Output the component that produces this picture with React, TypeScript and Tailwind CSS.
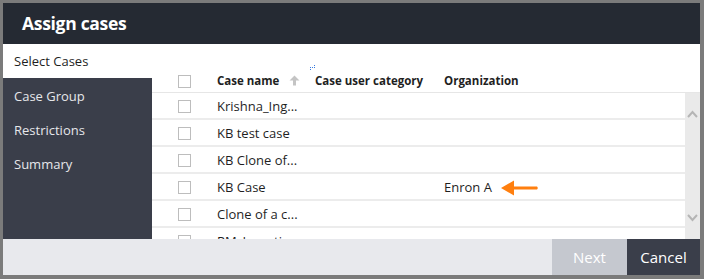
import React from 'react'

const rows = [
    { name: 'Krishna_Ing...', org: '' },
    { name: 'KB test case', org: '' },
    { name: 'KB Clone of...', org: '' },
    { name: 'KB Case', org: 'Enron A', arrow: true },
    { name: 'Clone of a c...', org: '' },
    { name: 'RM_Investig...', org: '' },
]

const Box = () => (
    <div className="w-[13px] h-[13px] border border-[#bdbdbd] bg-white" />
)

const App = () => {
    return (
        <div
            className="w-[704px] h-[279px] bg-[#7b7b7b] pt-[3px] pl-[3px] pr-[4px] pb-[4px] text-[#1f1f1f]"
            style={{ fontFamily: '"Open Sans", "Noto Sans", sans-serif' }}
        >
            <div className="flex flex-col w-full h-full bg-white overflow-hidden">
                {/* header */}
                <div className="h-[41px] shrink-0 bg-[#252a33] flex items-center pl-[19px]">
                    <span className="text-white text-[17.5px] font-bold tracking-[-0.3px]">Assign cases</span>
                </div>
                <div className="flex flex-1 min-h-0">
                    {/* sidebar */}
                    <div className="w-[149px] shrink-0 flex flex-col">
                        <div className="h-[34px] shrink-0 flex items-center pl-[11px] pt-[2px] text-[13px]">Select Cases</div>
                        <div className="flex-1 bg-[#3a3e4a] text-[#e6e7ea] text-[13px]">
                            <div className="h-[34px] flex items-center pl-[11px] pt-[4px]">Case Group</div>
                            <div className="h-[34px] flex items-center pl-[11px] pt-[4px]">Restrictions</div>
                            <div className="h-[34px] flex items-center pl-[11px] pt-[4px]">Summary</div>
                        </div>
                    </div>
                    {/* table */}
                    <div className="flex-1 flex flex-col min-w-0">
                        <div className="relative h-[49px] shrink-0 flex items-end border-b border-[#e6e6e6] pb-[3px] text-[11.5px] font-bold">
                            <div className="w-[65px] flex justify-center pb-[1px]"><Box /></div>
                            <div className="w-[98px] flex items-center">
                                <span>Case name</span>
                                <svg width="11" height="11" viewBox="0 0 11 11" className="ml-[10px]">
                                    <path d="M5.5 0.5 L10.5 5.5 L7 5.5 L7 10.5 L4 10.5 L4 5.5 L0.5 5.5 Z" fill="#c4c4c4" />
                                </svg>
                            </div>
                            <div className="w-[129px]">Case user category</div>
                            <div>Organization</div>
                            <div className="absolute left-[158px] top-[21px] grid grid-cols-3 gap-[1px]">
                                {Array.from({ length: 5 }).map((_, i) => (
                                    <div key={i} className={`w-[1px] h-[1px] bg-[#3b7de0] ${i === 0 ? 'col-start-3' : ''}`} />
                                ))}
                            </div>
                        </div>
                        <div className="flex flex-1 min-h-0">
                            <div className="flex-1 overflow-hidden">
                                {rows.map((r, i) => (
                                    <div key={i} className="h-[27px] shrink-0 flex items-center border-b-2 border-[#ececec] pt-[2px] text-[13px]">
                                        <div className="w-[65px] flex justify-center"><Box /></div>
                                        <div className="w-[227px]">{r.name}</div>
                                        <div className="flex items-center">
                                            <span>{r.org}</span>
                                            {r.arrow && (
                                                <svg width="40" height="18" viewBox="0 0 40 18" className="ml-[8px]">
                                                    <path d="M1 9 L14 1.5 L14 7.5 L37 7.5 Q38.5 9 37 10.5 L14 10.5 L14 16.5 Z" fill="#ff7f0e" />
                                                </svg>
                                            )}
                                        </div>
                                    </div>
                                ))}
                            </div>
                            <div className="w-[15px] shrink-0 bg-[#eaeaea] flex flex-col items-center justify-between pt-[17px] pb-[17px]">
                                <svg width="11" height="8" viewBox="0 0 11 8">
                                    <path d="M1 7 L5.5 2 L10 7" stroke="#b5b5b5" strokeWidth="2" fill="none" />
                                </svg>
                                <svg width="11" height="8" viewBox="0 0 11 8">
                                    <path d="M1 1 L5.5 6 L10 1" stroke="#b5b5b5" strokeWidth="2" fill="none" />
                                </svg>
                            </div>
                        </div>
                    </div>
                </div>
                {/* footer */}
                <div className="h-[36px] shrink-0 bg-[#e8e9ed] flex justify-end text-[15px] text-white">
                    <div className="w-[75px] bg-[#c5c8cf] flex items-center justify-center">Next</div>
                    <div className="w-[73px] bg-[#3a3e4a] flex items-center justify-center">Cancel</div>
                </div>
            </div>
        </div>
    )
}

export default App
